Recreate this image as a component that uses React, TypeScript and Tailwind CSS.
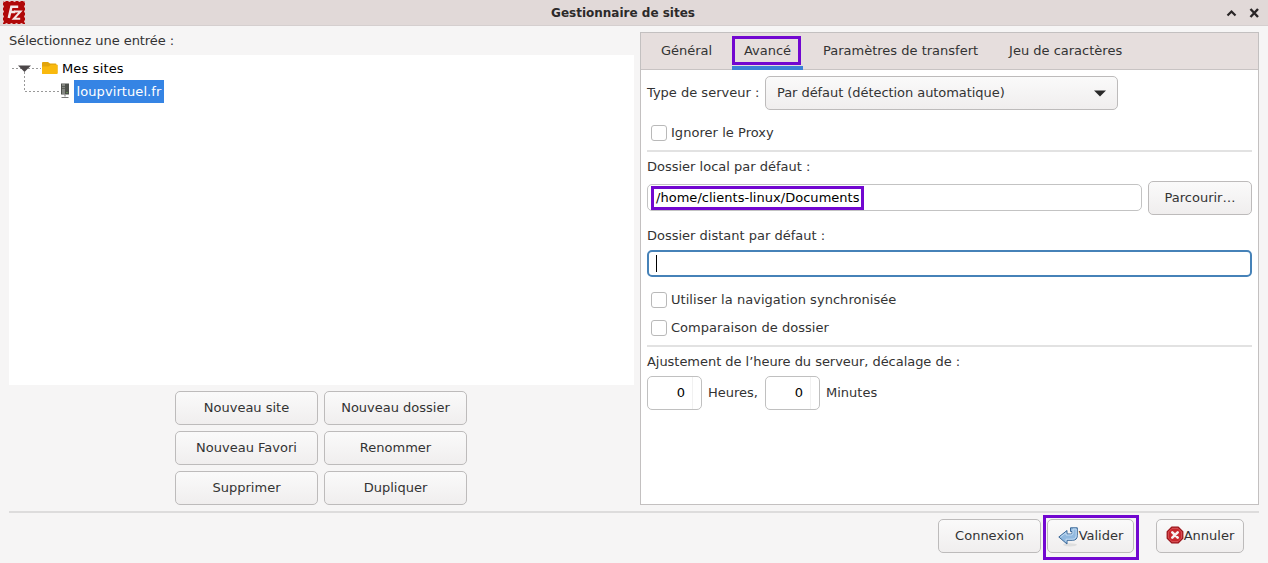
import type { ReactNode } from "react";

const buttonBase =
  "flex items-center rounded-[5px] border border-[#bdbbbb] bg-linear-to-b from-[#fafafa] to-[#f0eeee] text-[#333333]";

function Button({ className, children }: { className: string; children: ReactNode }) {
  return <button className={`${buttonBase} ${className}`}>{children}</button>;
}

function CheckRow({ label, className }: { label: string; className: string }) {
  return (
    <label className={`flex items-center pl-1 tracking-[0.04px] ${className}`}>
      <span className="size-4 rounded-[3px] border border-[#b9b9b9] bg-white" />
      <span className="ml-1">{label}</span>
    </label>
  );
}

function Spin() {
  return (
    <div className="flex h-[34px] w-[55px] rounded-[5px] border border-[#c0c0c0] bg-white text-black">
      <span className="flex w-[45px] items-center justify-end border-r border-[#f1f1f1] pr-[7px]">0</span>
    </div>
  );
}

function Logo() {
  return (
    <svg className="ml-[3px] shrink-0" width="22" height="23" viewBox="0 0 22 23">
      <rect width="22" height="23" fill="#b00808" />
      <rect x=".5" y=".5" width="21" height="22" fill="none" stroke="#e8b5b5" strokeDasharray="2 3" />
      <path d="M5.800 17 8.400 5.800h6.800M7.200 11h5" fill="none" stroke="#f4e7e7" strokeWidth="2.500" />
      <path d="M11 10.500h6.500L10.800 17.800h6.400" fill="none" stroke="#f4e7e7" strokeWidth="2" />
    </svg>
  );
}

function Tree() {
  return (
    <div className="h-[330px] w-[625px] bg-white pt-[2px] text-black">
      <div className="flex h-[23px] items-center">
        <svg className="shrink-0" width="53" height="23" viewBox="0 0 53 23">
          <path d="M3 11.5h29M15.5 15v8" stroke="#999" strokeDasharray="2 2" />
          <path d="M9 8.500h13l-6.500 6.500z" fill="#4b4648" />
          <path d="M33 6a1 1 0 0 1 1-1h5l2 1.500h5.500a1 1 0 0 1 1 1V8h1v8a1 1 0 0 1-1 1H34a1 1 0 0 1-1-1z" fill="#e2a40b" />
          <path d="M33 9.500h6.500L42 7.800h6.500V16a1 1 0 0 1-1 1H34a1 1 0 0 1-1-1z" fill="#f9b90e" />
        </svg>
        <span className="tracking-[0.15px]">Mes sites</span>
      </div>
      <div className="flex h-[23px] items-center">
        <svg className="shrink-0" width="65" height="23" viewBox="0 0 65 23">
          <path d="M15.500 0v11.500H51" fill="none" stroke="#999" strokeDasharray="2 2" />
          <path d="M52 3.500h8v11h-8z" fill="#4e514c" />
          <path d="M53 4h3v10h-3z" fill="#858883" />
          <path d="M53 6.500h3m-3 2h3" stroke="#5c5f59" />
          <path d="M56 14.500v2M52.500 17.500h7" stroke="#777" />
          <path d="M57.500 12h1v1h-1z" fill="#79c45a" />
        </svg>
        <span className="flex h-[23px] w-[90px] items-center justify-center bg-[#3584e4] tracking-[0.08px] text-white">loupvirtuel.fr</span>
      </div>
    </div>
  );
}

function ValidateIcon() {
  return (
    <svg className="mt-[1px] shrink-0" width="21" height="20" viewBox="0 0 21 20">
      <ellipse cx="12" cy="17.800" rx="7" ry="1.600" fill="#dedede" />
      <path
        d="M.8 10 9 3.500V7h3.500c1.200 0 1.500-.5 1.500-1.500V4.500h-1.500V.8h6.800v7.700c0 3.200-1.600 4.800-4.800 4.800H9V17z"
        fill="#91b9df"
        stroke="#3b6898"
        strokeLinejoin="round"
      />
      <path d="M2.500 10 8 5.700V8h5c1.600 0 2-.9 2-2.500V2h3.200v6.300c0 2.600-1.200 3.900-3.900 3.900H8v2.400" fill="none" stroke="#c8e0f5" strokeWidth=".9" />
    </svg>
  );
}

function CancelIcon() {
  return (
    <svg className="-mt-px shrink-0" width="18" height="18" viewBox="0 0 18 18">
      <path d="M5.700 1.200h6.600l4.500 4.500v6.600l-4.500 4.500H5.700l-4.500-4.500V5.700z" fill="#c8262c" stroke="#971016" strokeWidth="1.200" strokeLinejoin="round" />
      <path d="M6 2.400h6L15.600 6v6L12 15.600H6L2.400 12V6z" fill="none" stroke="#dd6468" strokeWidth=".7" />
      <path d="m6.300 6.300 5.400 5.400m0-5.400-5.400 5.400" stroke="#f7efef" strokeWidth="2.600" strokeLinecap="round" />
    </svg>
  );
}

export default function App() {
  return (
    <div className="flex h-[563px] w-[1268px] flex-col overflow-hidden bg-[#f6f5f5] font-['DejaVu_Sans',sans-serif] text-[13px] leading-[16px] text-[#333333]">
      <header className="grid h-[26px] shrink-0 grid-cols-[1fr_auto_1fr] items-center border-b border-[#d5cfcf] bg-[#e1d9d8]">
        <Logo />
        <h1 className="pl-[1px] pr-[23px] text-[12px] font-bold text-[#2c2a2a]">Gestionnaire de sites</h1>
        <svg className="justify-self-end" width="46" height="14" viewBox="0 0 46 14">
          <path d="m5.500 9.500 4-4 4 4" fill="none" stroke="#292526" strokeWidth="2.200" />
          <path d="m28.500 3 7.500 8m0-8-7.500 8" stroke="#292526" strokeWidth="2.400" />
        </svg>
      </header>

      <main className="flex h-[479px] shrink-0 pl-[9px]">
        <section className="w-[625px]">
          <div className="flex h-[29px] items-center tracking-[-0.06px]">Sélectionnez une entrée :</div>
          <Tree />
          <div className="mt-[6px] ml-[166px] grid w-[292px] grid-cols-2 gap-[6px]">
            <Button className="h-[34px] justify-center pb-px">Nouveau site</Button>
            <Button className="h-[34px] justify-center pb-px">Nouveau dossier</Button>
            <Button className="h-[34px] justify-center pb-px">Nouveau Favori</Button>
            <Button className="h-[34px] justify-center pb-px">Renommer</Button>
            <Button className="h-[34px] justify-center pb-px">Supprimer</Button>
            <Button className="h-[34px] justify-center pb-px">Dupliquer</Button>
          </div>
        </section>

        <section className="mt-[6px] ml-[6px] h-[473px] w-[619px] border border-[#c3c0c0] bg-white">
          <nav className="flex h-[37px] border-b border-[#c8c3c3] bg-[#e6dedd]">
            <div className="flex w-[91px] items-center justify-center">Général</div>
            <div className="relative flex h-[37px] w-[71px] items-center justify-center border-b-4 border-[#3b82d6] pt-[3px]">
              Avancé
              <span className="absolute top-[3px] left-0 h-[29px] w-[69px] border-[3px] border-[#7207d0]" />
            </div>
            <div className="ml-[20px] flex items-center">Paramètres de transfert</div>
            <div className="ml-[31px] flex items-center">Jeu de caractères</div>
          </nav>
          <div className="px-[6px] pt-[6px]">
            <div className="flex h-[34px] items-center">
              <span className="w-[118px]">Type de serveur :</span>
              <Button className="h-[34px] w-[353px] justify-between pr-[11px] pb-px pl-[11px]">
                <span className="tracking-[-0.06px]">Par défaut (détection automatique)</span>
                <svg className="mt-px" width="12" height="7" viewBox="0 0 12 7"><path d="M0 .5h12L6 6.500z" fill="#292929" /></svg>
              </Button>
            </div>
            <CheckRow label="Ignorer le Proxy" className="mt-[14px] h-[18px]" />
            <hr className="mt-[8px] h-[2px] border-0 bg-[#e2e2e2]" />
            <div className="mt-[7px]">Dossier local par défaut :</div>
            <div className="mt-[6px] flex h-[34px] items-center justify-between">
              <div className="relative -mt-px flex h-[27px] w-[495px] items-center rounded-[5px] border border-[#c3c3c3] pl-2 text-black">
                <span className="tracking-[0.03px]">/home/clients-linux/Documents</span>
                <span className="absolute top-px left-[3px] h-[24px] w-[213px] border-[3px] border-[#7207d0]" />
              </div>
              <Button className="h-[34px] w-[104px] justify-center pb-px">Parcourir…</Button>
            </div>
            <div className="mt-[13px]">Dossier distant par défaut :</div>
            <div className="mt-[6px] flex h-[27px] items-center rounded-[5px] border-2 border-[#4682b8] bg-white pl-[7px]">
              <span className="h-[17px] w-px bg-black" />
            </div>
            <CheckRow label="Utiliser la navigation synchronisée" className="mt-[14px] h-[18px]" />
            <CheckRow label="Comparaison de dossier" className="mt-[10px] h-[18px]" />
            <hr className="mt-[8px] h-[2px] border-0 bg-[#e2e2e2]" />
            <div className="mt-[7px] tracking-[-0.04px]">Ajustement de l’heure du serveur, décalage de :</div>
            <div className="mt-[6px] flex h-[34px] items-center">
              <Spin />
              <span className="w-[63px] pl-[6px]">Heures,</span>
              <Spin />
              <span className="pl-[6px]">Minutes</span>
            </div>
          </div>
        </section>
      </main>

      <footer className="mx-[9px] mt-[6px] flex shrink-0 border-t-2 border-[#dddcdc] pt-[2px] pl-[929px]">
        <Button className="mt-[4px] h-[34px] w-[103px] justify-center pb-px">Connexion</Button>
        <div className="ml-[2px] h-[45px] w-[96px] border-[3px] border-[#7207d0] p-px">
          <Button className="h-[34px] w-[87px] justify-center"><ValidateIcon />Valider</Button>
        </div>
        <Button className="mt-[4px] ml-[17px] h-[34px] w-[88px] justify-center pb-px"><CancelIcon />Annuler</Button>
      </footer>
    </div>
  );
}
